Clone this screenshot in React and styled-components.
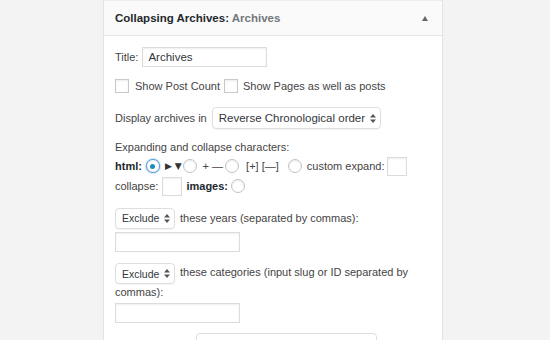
import React from "react";
import styled, { createGlobalStyle } from "styled-components";

const GlobalStyle = createGlobalStyle`
  body {
    margin: 0;
    background: #f3f3f3;
    font-family: "Liberation Sans", Arial, sans-serif;
    font-size: 11px;
    color: #444;
  }
`;

const Page = styled.div`
  width: 550px;
  height: 340px;
  overflow: hidden;
  padding-left: 103px;
  box-sizing: border-box;
`;

const Widget = styled.div`
  width: 338px;
  border: 1px solid #e3e3e3;
  border-top: none;
  background: #fff;
  box-shadow: 0 1px 1px rgba(0, 0, 0, 0.04);
`;

const Header = styled.div`
  height: 34px;
  display: flex;
  align-items: center;
  justify-content: space-between;
  padding: 0 14px 0 11px;
  background: #fafafa;
  border-bottom: 1px solid #e5e5e5;
  border-top: 1px solid #ececec;
`;

const HeaderTitle = styled.div`
  font-weight: bold;
  color: #23282d;
  font-size: 11.5px;
  span {
    color: #72777c;
  }
`;

const ToggleArrow = styled.div`
  width: 0;
  height: 0;
  border-left: 3.5px solid transparent;
  border-right: 3.5px solid transparent;
  border-bottom: 5px solid #666;
`;

const Body = styled.div`
  padding: 0 11px 20px 11px;
`;

const Row = styled.div`
  display: flex;
  align-items: center;
  margin-top: ${(p) => p.$top || 0}px;
  min-height: ${(p) => p.$h || 18}px;
  line-height: 18px;
  white-space: nowrap;
`;

const Para = styled.div`
  margin-top: ${(p) => p.$top || 0}px;
  line-height: 17px;
`;

const Label = styled.span`
  margin-right: ${(p) => p.$mr || 0}px;
  margin-left: ${(p) => p.$ml || 0}px;
  font-weight: ${(p) => (p.$bold ? "bold" : "normal")};
  color: ${(p) => (p.$bold ? "#23282d" : "#444")};
`;

const TextInput = styled.div`
  width: ${(p) => p.$w}px;
  height: ${(p) => p.$h || 20}px;
  box-sizing: border-box;
  border: 1px solid #dcdcdc;
  background: #fff;
  box-shadow: inset 0 1px 2px rgba(0, 0, 0, 0.07);
  padding: 0 5px;
  line-height: 18px;
  font-size: 11.5px;
  color: #32373c;
  margin-left: ${(p) => p.$ml || 0}px;
  margin-right: ${(p) => p.$mr || 0}px;
  margin-top: ${(p) => p.$top || 0}px;
`;

const Checkbox = styled.span`
  display: inline-block;
  width: 14px;
  height: 14px;
  box-sizing: border-box;
  border: 1px solid #c9c9c9;
  background: #fff;
  box-shadow: inset 0 1px 2px rgba(0, 0, 0, 0.08);
  margin-right: ${(p) => p.$mr || 0}px;
  margin-left: ${(p) => p.$ml || 0}px;
`;

const Radio = styled.span`
  display: inline-flex;
  align-items: center;
  justify-content: center;
  width: 14px;
  height: 14px;
  box-sizing: border-box;
  border-radius: 50%;
  border: 1px solid ${(p) => (p.$checked ? "#5b9dd9" : "#c3c3c3")};
  box-shadow: ${(p) =>
    p.$checked ? "0 0 2px rgba(30, 140, 190, 0.8)" : "inset 0 1px 2px rgba(0, 0, 0, 0.08)"};
  background: #fff;
  margin-left: ${(p) => p.$ml || 0}px;
  margin-right: ${(p) => p.$mr || 0}px;
  &::after {
    content: "";
    display: ${(p) => (p.$checked ? "block" : "none")};
    width: 5px;
    height: 5px;
    border-radius: 50%;
    background: #1e8cbe;
  }
`;

const SelectBox = styled.span`
  display: inline-flex;
  align-items: center;
  justify-content: space-between;
  gap: 4px;
  vertical-align: middle;
  box-sizing: border-box;
  width: ${(p) => p.$w}px;
  height: ${(p) => p.$h || 22}px;
  padding: 0 4px 0 6px;
  border: 1px solid #dedede;
  border-radius: 4px;
  background: #fff;
  box-shadow: 0 1px 1px rgba(0, 0, 0, 0.04);
  font-size: ${(p) => p.$fs || 11.5}px;
  line-height: 14px;
  color: #32373c;
  white-space: nowrap;
  margin-right: ${(p) => p.$mr || 0}px;
  margin-left: ${(p) => p.$ml || 0}px;
`;

const Glyphs = styled.span`
  font-family: "DejaVu Sans", sans-serif;
  font-size: 9px;
  color: #333;
  margin-left: ${(p) => p.$ml || 0}px;
  margin-right: ${(p) => p.$mr || 0}px;
`;

const UpDown = () => (
  <svg width="6" height="9" viewBox="0 0 6 9">
    <path d="M0 3.5 L3 0 L6 3.5 Z" fill="#555" />
    <path d="M0 5.5 L3 9 L6 5.5 Z" fill="#555" />
  </svg>
);

const Select = ({ children, ...rest }) => (
  <SelectBox {...rest}>
    <span>{children}</span>
    <UpDown />
  </SelectBox>
);

export default function App() {
  return (
    <>
      <GlobalStyle />
      <Page>
        <Widget>
          <Header>
            <HeaderTitle>
              Collapsing Archives: <span>Archives</span>
            </HeaderTitle>
            <ToggleArrow />
          </Header>
          <Body>
            <Row $top={11} $h={20}>
              <Label $mr={4}>Title:</Label>
              <TextInput $w={125}>Archives</TextInput>
            </Row>
            <Row $top={10} $h={16}>
              <Checkbox $mr={6} />
              <Label $mr={4}>Show Post Count</Label>
              <Checkbox $mr={5} />
              <Label>Show Pages as well as posts</Label>
            </Row>
            <Row $top={12} $h={22}>
              <Label $mr={5}>Display archives in</Label>
              <Select $w={169}>Reverse Chronological order</Select>
            </Row>
            <Row $top={9}>
              <Label>Expanding and collapse characters:</Label>
            </Row>
            <Row $h={20}>
              <Label $bold $mr={4}>html:</Label>
              <Radio $checked />
              <Glyphs $ml={5} $mr={1}>▶ ▼</Glyphs>
              <Radio />
              <Label $ml={6}>+ —</Label>
              <Radio $ml={2} />
              <Label $ml={7}>[+] [—]</Label>
              <Radio $ml={9} />
              <Label $ml={5} $mr={3}>custom expand:</Label>
              <TextInput $w={20} $h={19} />
            </Row>
            <Row $h={20}>
              <Label $mr={4}>collapse:</Label>
              <TextInput $w={20} $h={19} $mr={4} />
              <Label $bold $mr={3}>images:</Label>
              <Radio />
            </Row>
            <Row $top={11} $h={22}>
              <Select $w={60} $h={21} $fs={10.5} $mr={5}>Exclude</Select>
              <Label>these years (separated by commas):</Label>
            </Row>
            <TextInput $w={125} $top={3} />
            <Para $top={11}>
              <Select $w={60} $h={21} $fs={10.5} $mr={5}>Exclude</Select>
              these categories (input slug or ID separated by commas):
            </Para>
            <TextInput $w={125} $top={2} />
            <Row $top={10} $h={22}>
              <Label $mr={23}>Truncate to:</Label>
              <Select $w={181}>do not truncate</Select>
            </Row>
          </Body>
        </Widget>
      </Page>
    </>
  );
}
